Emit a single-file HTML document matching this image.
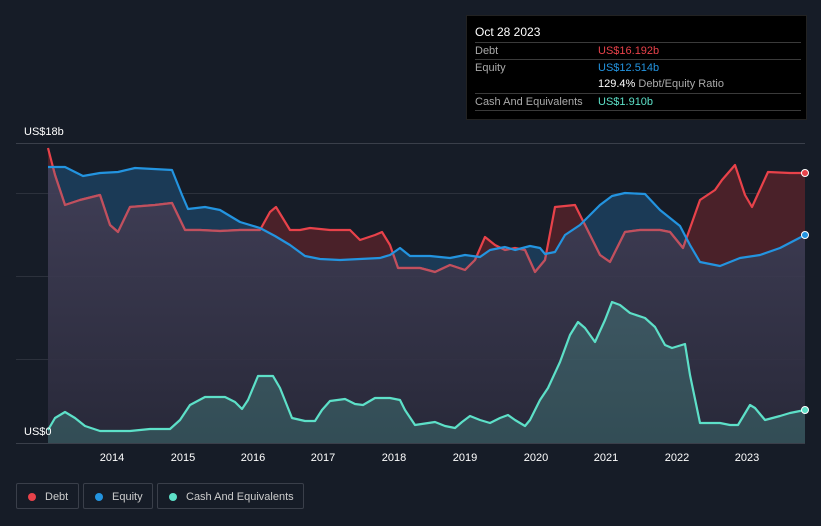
<!DOCTYPE html>
<html><head><meta charset="utf-8"><style>
body{margin:0;width:821px;height:526px;background:#161c27;font-family:"Liberation Sans",sans-serif;overflow:hidden;position:relative}
.tt{position:absolute;left:466px;top:15px;width:339px;height:103px;background:#000;border:1px solid #222;}
.tt .h{position:absolute;left:8px;top:9px;color:#fff;font-size:12px}
.row{position:absolute;left:8px;width:326px;border-top:1px solid #3a3a3a;height:17px;font-size:11px;color:#aaa;line-height:17px}
.row span{position:absolute;left:123px}
.leg{position:absolute;top:483px;height:26px;border:1px solid #3a3f4a;border-radius:2px;color:#ccc;font-size:11px;line-height:26px;box-sizing:border-box}
.leg i{position:absolute;left:11px;top:9px;width:8px;height:8px;border-radius:50%}
.leg b{font-weight:normal;position:absolute;left:28px}
</style></head><body>
<svg width="821" height="526" style="position:absolute;left:0;top:0">
<defs>
<linearGradient id="pg" x1="0" y1="0" x2="0" y2="1"><stop offset="0" stop-color="#47445e"/><stop offset="1" stop-color="#2a2a3b"/></linearGradient>
<clipPath id="aboveDebt"><polygon points="48,0 48,148 55,175 65,205 80,200 100,195 110,225 118,232 130,207 155,205 172,203 185,230 200,230 220,231 240,230 260,230 270,212 276,207 290,230 300,230 310,228 330,230 350,230 360,240 375,235 382,232 390,245 398,268 420,268 435,272 450,265 465,270 475,260 485,237 495,245 505,250 515,248 525,250 535,272 545,260 555,207 575,205 585,225 600,255 610,262 625,232 640,230 660,230 670,232 683,248 700,200 715,190 722,180 735,165 745,195 752,207 768,172 790,173 805,173 805,0"/></clipPath>
<clipPath id="aboveEq"><polygon points="48,0 48,167 65,167 83,176 100,173 118,172 135,168 172,170 182,195 188,209 205,207 220,210 240,222 260,228 275,236 290,245 305,256 320,259 340,260 360,259 380,258 390,255 400,248 410,256 430,256 450,258 465,255 480,257 490,250 505,247 515,250 530,246 540,248 545,254 555,252 565,235 580,225 590,215 600,205 612,196 625,193 645,194 660,210 670,218 680,226 690,245 700,262 720,266 740,258 760,255 780,248 805,235 805,0"/></clipPath>
<clipPath id="belowEq"><polygon points="48,443 48,167 65,167 83,176 100,173 118,172 135,168 172,170 182,195 188,209 205,207 220,210 240,222 260,228 275,236 290,245 305,256 320,259 340,260 360,259 380,258 390,255 400,248 410,256 430,256 450,258 465,255 480,257 490,250 505,247 515,250 530,246 540,248 545,254 555,252 565,235 580,225 590,215 600,205 612,196 625,193 645,194 660,210 670,218 680,226 690,245 700,262 720,266 740,258 760,255 780,248 805,235 805,443"/></clipPath>
</defs>
<g stroke="#2c313c" stroke-width="1">
<line x1="16" y1="143.5" x2="805" y2="143.5" stroke="#3a3f4a"/><line x1="16" y1="193.5" x2="805" y2="193.5"/><line x1="16" y1="276.5" x2="805" y2="276.5"/><line x1="16" y1="359.5" x2="805" y2="359.5"/><line x1="16" y1="443.5" x2="805" y2="443.5" stroke="#3a3f4a"/>
</g>
<polyline points="48,443 48,167 65,167 83,176 100,173 118,172 135,168 172,170 182,195 188,209 205,207 220,210 240,222 260,228 275,236 290,245 305,256 320,259 340,260 360,259 380,258 390,255 400,248 410,256 430,256 450,258 465,255 480,257 490,250 505,247 515,250 530,246 540,248 545,254 555,252 565,235 580,225 590,215 600,205 612,196 625,193 645,194 660,210 670,218 680,226 690,245 700,262 720,266 740,258 760,255 780,248 805,235 805,443" fill="#1b3a56" clip-path="url(#aboveDebt)"/>
<polygon points="48,443 48,148 55,175 65,205 80,200 100,195 110,225 118,232 130,207 155,205 172,203 185,230 200,230 220,231 240,230 260,230 270,212 276,207 290,230 300,230 310,228 330,230 350,230 360,240 375,235 382,232 390,245 398,268 420,268 435,272 450,265 465,270 475,260 485,237 495,245 505,250 515,248 525,250 535,272 545,260 555,207 575,205 585,225 600,255 610,262 625,232 640,230 660,230 670,232 683,248 700,200 715,190 722,180 735,165 745,195 752,207 768,172 790,173 805,173 805,443" fill="#4a2129" clip-path="url(#aboveEq)"/>
<polyline points="48,148 55,175 65,205 80,200 100,195 110,225 118,232 130,207 155,205 172,203 185,230 200,230 220,231 240,230 260,230 270,212 276,207 290,230 300,230 310,228 330,230 350,230 360,240 375,235 382,232 390,245 398,268 420,268 435,272 450,265 465,270 475,260 485,237 495,245 505,250 515,248 525,250 535,272 545,260 555,207 575,205 585,225 600,255 610,262 625,232 640,230 660,230 670,232 683,248 700,200 715,190 722,180 735,165 745,195 752,207 768,172 790,173 805,173" fill="none" stroke="#e8424a" stroke-width="2.2" stroke-linejoin="round"/>
<polygon points="48,443 48,148 55,175 65,205 80,200 100,195 110,225 118,232 130,207 155,205 172,203 185,230 200,230 220,231 240,230 260,230 270,212 276,207 290,230 300,230 310,228 330,230 350,230 360,240 375,235 382,232 390,245 398,268 420,268 435,272 450,265 465,270 475,260 485,237 495,245 505,250 515,248 525,250 535,272 545,260 555,207 575,205 585,225 600,255 610,262 625,232 640,230 660,230 670,232 683,248 700,200 715,190 722,180 735,165 745,195 752,207 768,172 790,173 805,173 805,443" fill="url(#pg)" opacity="0.9" clip-path="url(#belowEq)"/>
<polyline points="48,148 55,175 65,205 80,200 100,195 110,225 118,232 130,207 155,205 172,203 185,230 200,230 220,231 240,230 260,230 270,212 276,207 290,230 300,230 310,228 330,230 350,230 360,240 375,235 382,232 390,245 398,268 420,268 435,272 450,265 465,270 475,260 485,237 495,245 505,250 515,248 525,250 535,272 545,260 555,207 575,205 585,225 600,255 610,262 625,232 640,230 660,230 670,232 683,248 700,200 715,190 722,180 735,165 745,195 752,207 768,172 790,173 805,173" fill="none" stroke="#c0505e" stroke-width="2.2" stroke-linejoin="round" clip-path="url(#belowEq)"/>
<polyline points="48,167 65,167 83,176 100,173 118,172 135,168 172,170 182,195 188,209 205,207 220,210 240,222 260,228 275,236 290,245 305,256 320,259 340,260 360,259 380,258 390,255 400,248 410,256 430,256 450,258 465,255 480,257 490,250 505,247 515,250 530,246 540,248 545,254 555,252 565,235 580,225 590,215 600,205 612,196 625,193 645,194 660,210 670,218 680,226 690,245 700,262 720,266 740,258 760,255 780,248 805,235" fill="none" stroke="#2394e0" stroke-width="2.2" stroke-linejoin="round"/>
<polygon points="48,443 48,430 55,418 65,412 75,418 85,426 100,431 130,431 150,429 170,429 180,420 190,405 205,397 225,397 235,402 242,409 248,400 258,376 273,376 280,388 292,418 305,421 315,421 322,410 330,401 345,399 355,404 363,405 375,398 390,398 400,400 405,410 415,425 435,422 445,426 455,428 462,422 470,416 480,420 490,423 500,418 508,415 515,420 525,426 530,420 540,400 548,388 560,362 570,335 578,322 585,328 595,342 605,320 612,302 620,305 630,313 645,318 655,327 665,345 672,348 685,344 690,375 700,423 720,423 730,425 738,425 750,405 755,408 765,420 780,416 790,413 805,410 805,443" fill="#5de0c8" opacity="0.2"/>
<polyline points="48,430 55,418 65,412 75,418 85,426 100,431 130,431 150,429 170,429 180,420 190,405 205,397 225,397 235,402 242,409 248,400 258,376 273,376 280,388 292,418 305,421 315,421 322,410 330,401 345,399 355,404 363,405 375,398 390,398 400,400 405,410 415,425 435,422 445,426 455,428 462,422 470,416 480,420 490,423 500,418 508,415 515,420 525,426 530,420 540,400 548,388 560,362 570,335 578,322 585,328 595,342 605,320 612,302 620,305 630,313 645,318 655,327 665,345 672,348 685,344 690,375 700,423 720,423 730,425 738,425 750,405 755,408 765,420 780,416 790,413 805,410" fill="none" stroke="#5de0c8" stroke-width="2.2" stroke-linejoin="round"/>
<circle cx="805" cy="173" r="3.5" fill="#e8424a" stroke="#fff" stroke-width="1"/>
<circle cx="805" cy="235" r="3.5" fill="#2394e0" stroke="#fff" stroke-width="1"/>
<circle cx="805" cy="410" r="3.5" fill="#5de0c8" stroke="#fff" stroke-width="1"/>
<g fill="#fff" font-size="11" font-family="Liberation Sans" text-anchor="middle">
<text x="112" y="461">2014</text><text x="183" y="461">2015</text><text x="253" y="461">2016</text><text x="323" y="461">2017</text><text x="394" y="461">2018</text><text x="465" y="461">2019</text><text x="536" y="461">2020</text><text x="606" y="461">2021</text><text x="677" y="461">2022</text><text x="747" y="461">2023</text>
</g>
<text x="24" y="135" fill="#fff" font-size="11" font-family="Liberation Sans">US$18b</text>
<text x="24" y="435" fill="#fff" font-size="11" font-family="Liberation Sans">US$0</text>
</svg>
<div class="tt">
<div class="h">Oct 28 2023</div>
<div class="row" style="top:26px">Debt<span style="color:#e8424a">US$16.192b</span></div>
<div class="row" style="top:43px">Equity<span style="color:#2394e0">US$12.514b</span></div>
<div class="row" style="top:60px;border-top:none"><span style="color:#fff">129.4% <em style="font-style:normal;color:#aaa">Debt/Equity Ratio</em></span></div>
<div class="row" style="top:77px">Cash And Equivalents<span style="color:#5de0c8">US$1.910b</span></div>
<div class="row" style="top:94px;height:0"></div>
</div>
<div class="leg" style="left:16px;width:63px"><i style="background:#e8424a"></i><b>Debt</b></div>
<div class="leg" style="left:83px;width:70px"><i style="background:#2394e0"></i><b>Equity</b></div>
<div class="leg" style="left:157px;width:147px"><i style="background:#5de0c8"></i><b>Cash And Equivalents</b></div>
</body></html>
